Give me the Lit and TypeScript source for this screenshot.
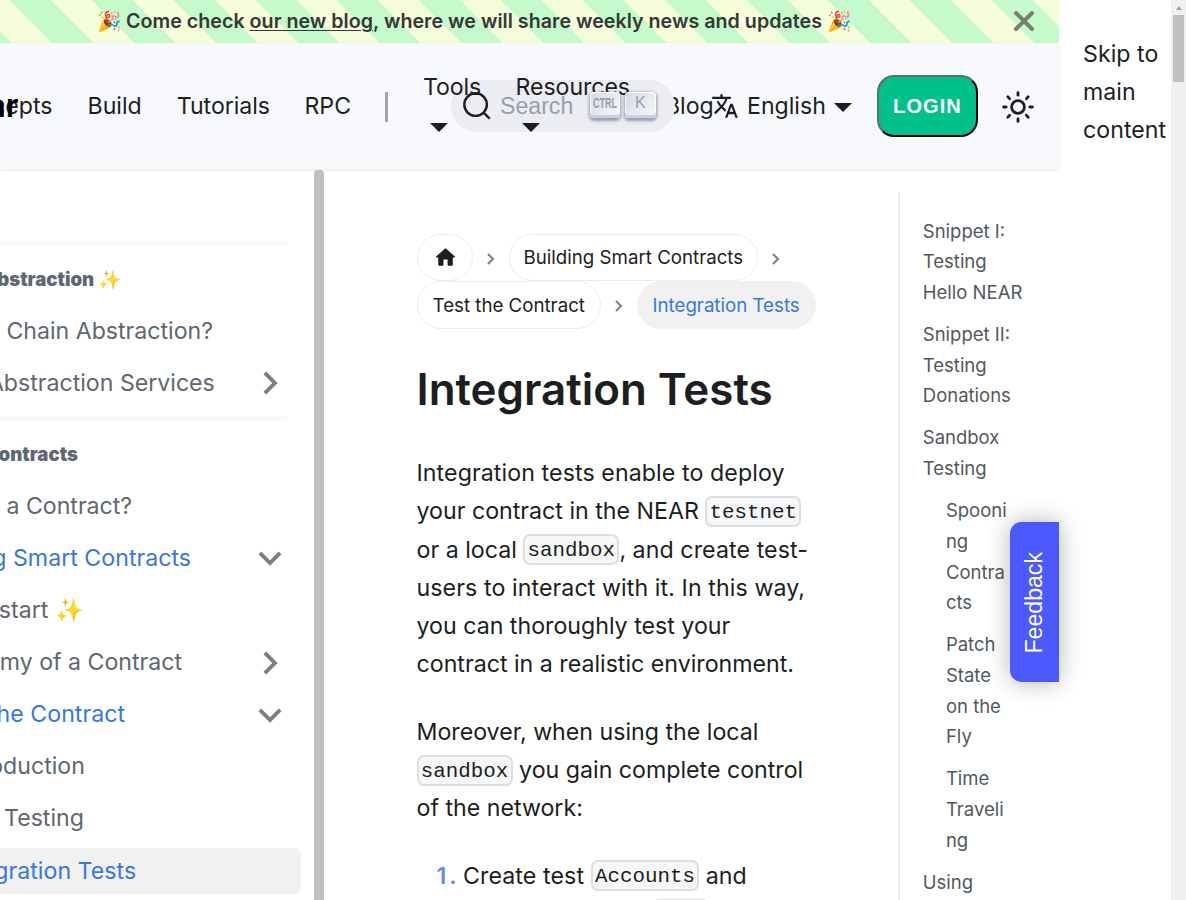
import { LitElement, html, css, svg } from "lit";
import { customElement } from "lit/decorators.js";

const chevron = (open: boolean) => html`
  <svg class="chev" width="46" height="46" viewBox="0 0 24 24">
    <path fill="#7f7f7f" transform=${open ? "rotate(180 12 12)" : "rotate(90 12 12)"}
      d="M7.41 15.41L12 10.83l4.59 4.58L18 14l-6-6-6 6z"></path>
  </svg>`;

const crumbSep = html`
  <svg class="sep" width="12" height="12" viewBox="0 0 12 12">
    <path d="M3 1 L8 6 L3 11" fill="none" stroke="#7f7f7f" stroke-width="2"></path>
  </svg>`;

type Row = { t: string; level: number; on?: boolean; chev?: "open" | "closed"; active?: boolean };

const groupA: Row[] = [
  { t: "What is Chain Abstraction?", level: 1 },
  { t: "Chain Abstraction Services", level: 1, chev: "closed" },
];
const groupB: Row[] = [
  { t: "What is a Contract?", level: 1 },
  { t: "Building Smart Contracts", level: 1, on: true, chev: "open" },
  { t: "Quickstart ✨", level: 2 },
  { t: "Anatomy of a Contract", level: 2, chev: "closed" },
  { t: "Test the Contract", level: 2, on: true, chev: "open" },
  { t: "Introduction", level: 3 },
  { t: "Unit Testing", level: 3 },
  { t: "Integration Tests", level: 3, on: true, active: true },
];
const toc: { lines: string[]; sub?: boolean }[] = [
  { lines: ["Snippet I:", "Testing", "Hello NEAR"] },
  { lines: ["Snippet II:", "Testing", "Donations"] },
  { lines: ["Sandbox", "Testing"] },
  { lines: ["Spooni", "ng", "Contra", "cts"], sub: true },
  { lines: ["Patch", "State", "on the", "Fly"], sub: true },
  { lines: ["Time", "Traveli", "ng"], sub: true },
  { lines: ["Using"] },
];

@customElement("app-root")
export class AppRoot extends LitElement {
  static styles = css`
    :host { display: block; height: 900px; overflow: hidden; background: #fff; color: #1c1e21;
      font: 23.14px/38.2px Inter, sans-serif; }
    * { box-sizing: border-box; }
    svg { display: block; flex: none; }
    .frame { display: grid; grid-template-columns: 1059px 112px 15px; height: 900px; }
    .site { display: flex; flex-direction: column; min-width: 0; height: 900px; }

    .banner { height: 43px; flex: none; display: flex; align-items: center; position: relative;
      background: repeating-linear-gradient(45deg, #c5fbcc 0 8.3px, #f5fddb 8.3px 37.2px, #c5fbcc 37.2px 57.86px);
      color: #373737; font-weight: 600; font-size: 19.67px; line-height: 43px; letter-spacing: .015px; }
    .banner p { margin: 0; width: 948px; text-align: center; white-space: nowrap; }
    .banner u { text-decoration-thickness: 1px; text-underline-offset: 2px; }
    .close { margin-left: 64.5px; margin-top: -1px; }

    .nav { height: 126px; margin-bottom: 1px; padding-top: 1px; flex: none; display: flex; align-items: center; background: #f8f9fc; position: relative;
      z-index: 1; box-shadow: 0 1px 3px rgba(0,0,0,.1); white-space: nowrap; }
    .nav > * { flex: none; }
    .concepts { width: 87.5px; display: flex; justify-content: flex-end; padding-right: 35px; position: relative; }
    .logo { position: absolute; right: 69px; top: 0; font-weight: 600; font-size: 32px; color: #000; }
    .build { width: 89.3px; }
    .tutorials { width: 127.7px; letter-spacing: -.05px; }
    .rpc { width: 80.5px; }
    .bar { width: 3px; height: 30px; background: #a3a4a6; }
    .drop { position: relative; z-index: 2; height: 76px; display: flex; flex-direction: column; margin-top: -1px; }
    .tri { width: 0; height: 0; border: 9px solid transparent; border-top-color: #1c1e21; border-bottom: 0; margin: 16.5px 0 0 7px; }
    .tools { width: 92.5px; margin-left: 35px; letter-spacing: -.1px; }
    .resources { width: 149.5px; letter-spacing: -.05px; }
    .blog { width: 46px; }
    .english { display: flex; align-items: center; width: 166px; }
    .english .tri { margin: 3px 0 0 8px; }
    .english svg { margin-right: 8px; }
    .search { position: absolute; left: 451px; top: 37px; width: 223.5px; height: 52px; border-radius: 26px; background: #ebedf0;
      z-index: 1; }
    .searchtop { position: absolute; z-index: 3; left: 451px; top: 37px; width: 223.5px; height: 52px; display: flex; align-items: center;
      padding-left: 11px; }
    .ph { font: 23.14px "Liberation Sans", sans-serif; color: #969faf; margin-left: 8px; width: 89.5px; }
    .key { width: 30.5px; height: 26px; border-radius: 4px; margin: -2px 5px 0 0; display: flex; justify-content: center;
      background: linear-gradient(-225deg, #d5dbe4, #f8f8f8);
      box-shadow: inset 0 -3px 0 0 #cdcde6, inset 0 0 1px 1px #fff, 0 1.5px 3px 1px rgba(30,35,90,.4);
      color: #969faf; font: 16px/21px "Liberation Sans", sans-serif; }
    .ctrl span { display: block; transform: scaleX(.6); font-weight: 700; font-size: 15px; line-height: 22px; }
    .login { width: 101px; height: 62px; border: 2px outset #1c1e21; border-radius: 17px; background: #00c08b; color: #fff;
      font: bold 20px "Liberation Sans", sans-serif; letter-spacing: 1.1px; padding: 0; margin: -1px 23px 0 0; }

    .body { flex: 1; display: grid; grid-template-columns: 323.5px 574.7px 160.8px; min-height: 0; }
    .side { display: flex; justify-content: space-between; min-height: 0; overflow: hidden; color: #606770; }
    .menu { width: 400px; margin-left: -98.8px; padding-top: 71px; flex: none; }
    .hr { height: 5px; background: #f8f8f9; margin-right: 14px; }
    .head { font-size: 18.6px; font-weight: 900; line-height: 23px; height: 23px; margin: 22px 0 17px 22.9px; white-space: nowrap; }
    .row { height: 46.3px; margin-top: 5.83px; display: flex; align-items: center; justify-content: space-between; border-radius: 5.8px;
      padding: 0 8.7px 0 17.4px; line-height: 28.9px; white-space: nowrap; }
    .row.l2 { margin-left: 17.36px; }
    .row.l3 { margin-left: 34.9px; }
    .row.on { color: #3578e5; letter-spacing: .03px; }
    .row.active { background: #f1f1f1; }
    .gap { height: 9.6px; }
    .track { width: 10px; border-radius: 5px 5px 0 0; background: #c0c0c0; flex: none; margin-top: -1px; position: relative; z-index: 2; }

    .main { padding: 64px 0 0 93px; min-height: 0; overflow: hidden; font-size: 23.18px; }
    .crumbs { display: flex; flex-direction: column; font-size: 18.7px; line-height: 30px; }
    .cr { display: flex; align-items: center; height: 47.4px; white-space: nowrap; }
    .pill { height: 47.4px; border: 1px solid #ebecee; border-radius: 24px; display: flex; align-items: center; justify-content: center; flex: none;
      padding-top: 1px; }
    .pill.cur { background: #f1f1f1; color: #3578e5; border-color: #f1f1f1; }
    .home { width: 56.5px; padding: 0; }
    .home svg { margin: -1px 0 0 1px; }
    .p2 { width: 249.5px; } .p3 { width: 184.5px; } .p4 { width: 179px; }
    .sep { margin: 2px 11.8px 0; }
    h1 { font-size: 43.9px; line-height: 57px; font-weight: 600; margin: 32px 0 36.5px; }
    .para { margin: 0 0 29.3px; white-space: nowrap; }
    .wide { letter-spacing: .09px; }
    code { font: 20.83px/28px "Liberation Mono", monospace; background: #f6f7f8; border: 2px solid #dcdee0;
      border-radius: 7px; padding: 1px 2.3px 1px; vertical-align: middle; display: inline-block; height: 31px; margin: -3px 0 0; }
    .li { display: flex; padding-left: 20px; white-space: nowrap; }
    .num { color: #6488ff; font-weight: 600; width: 26.5px; letter-spacing: 3px; }
    .li2 { padding-left: 235px; }

    .toc { margin-top: 22px; border-left: 2px solid #eeeeef; padding: 23.6px 0 0 22.6px; font-size: 18.51px; line-height: 30.63px;
      color: #525860; min-height: 0; overflow: hidden; }
    .ti { margin-bottom: 11.57px; white-space: nowrap; }
    .ti.sub { margin-left: 23.14px; }
    .feedback { position: absolute; left: 1010px; top: 522.3px; width: 49px; height: 160px; background: #4a5aff; color: #fff; z-index: 3;
      border-radius: 11.6px 0 0 11.6px; box-shadow: 0 0 23px rgba(0,0,0,.3); font: 23.14px "Liberation Sans", sans-serif;
      display: flex; align-items: center; justify-content: center; }
    .feedback span { writing-mode: vertical-rl; transform: rotate(180deg); }
    .skip { padding: 34.5px 0 0 24px; letter-spacing: .05px; }
    .scroll { background: #f0f0f0; display: flex; flex-direction: column; align-items: center; padding-top: 6px; }
    .up { width: 0; height: 0; border: 3.5px solid transparent; border-top: 0; border-bottom: 4px solid #a3a3a3; }
    .thumb { width: 11px; height: 67px; background: #c1c1c1; margin-top: 5px; }
  `;

  row(r: Row) {
    return html`<div class="row l${r.level} ${r.on ? "on" : ""} ${r.active ? "active" : ""}">
      <span>${r.t}</span>${r.chev ? chevron(r.chev === "open") : ""}</div>`;
  }

  render() {
    const rays = [0, 45, 90, 135, 180, 225, 270, 315];
    return html`
      <div class="frame">
        <div class="site">
          <div class="banner">
            <p>🎉 Come check <u>our new blog</u>, where we will share weekly news and updates 🎉</p>
            <svg class="close" width="22" height="22" viewBox="0 0 22 22">
              <path d="M3 3L19 19M19 3L3 19" stroke="#7b806e" stroke-width="4" stroke-linecap="round"></path>
            </svg>
          </div>
          <div class="nav">
            <div class="concepts">Concepts<span class="logo">Near</span></div>
            <div class="build">Build</div>
            <div class="tutorials">Tutorials</div>
            <div class="rpc">RPC</div>
            <div class="bar"></div>
            <div class="drop tools">Tools<i class="tri"></i></div>
            <div class="drop resources">Resources<i class="tri"></i></div>
            <div class="blog">Blog</div>
            <div class="english">
              <svg width="28" height="28" viewBox="0 0 24 24"><path fill="#1c1e21" d="M12.87 15.07l-2.54-2.51.03-.03c1.74-1.94 2.98-4.17 3.71-6.53H17V4h-7V2H8v2H1v1.99h11.17C11.5 7.92 10.44 9.75 9 11.35 8.07 10.32 7.3 9.19 6.69 8h-2c.73 1.63 1.73 3.17 2.98 4.56l-5.09 5.02L4 19l5-5 3.11 3.11.76-2.04zM18.5 10h-2L12 22h2l1.12-3h4.75L21 22h2l-4.500-12zm-2.620 7l1.620-4.330L19.120 17h-3.240z"></path></svg>
              English<i class="tri"></i>
            </div>
            <button class="login">LOGIN</button>
            <svg width="34" height="34" viewBox="-17 -17 34 34">
              <circle r="6.4" fill="none" stroke="#1c1e21" stroke-width="2.8"></circle>
              ${rays.map((a) => svg`<path transform="rotate(${a})" d="M0 -14.400V-11.800" stroke="#1c1e21" stroke-width="2.8" stroke-linecap="round"></path>`)}
            </svg>
            <div class="search"></div>
            <div class="searchtop">
              <svg width="30" height="30" viewBox="0 0 20 20"><path d="M14.386 14.386l4.0877 4.0877-4.0877-4.0877c-2.9418 2.9419-7.7115 2.9419-10.6533 0-2.9419-2.9418-2.9419-7.7115 0-10.6533 2.9418-2.9419 7.7115-2.9419 10.6533 0 2.9419 2.9418 2.9419 7.7115 0 10.6533z" stroke="#1c1e21" stroke-width="1.6" fill="none" stroke-linecap="round"></path></svg>
              <span class="ph">Search</span>
              <span class="key ctrl"><span>CTRL</span></span>
              <span class="key">K</span>
            </div>
          </div>
          <div class="body">
            <div class="side">
              <div class="menu">
                <div class="hr"></div>
                <div class="head">Chain Abstraction ✨</div>
                ${groupA.map((r) => this.row(r))}
                <div class="gap"></div>
                <div class="hr"></div>
                <div class="head">Smart Contracts</div>
                ${groupB.map((r) => this.row(r))}
              </div>
              <div class="track"></div>
            </div>
            <div class="main">
              <div class="crumbs">
                <div class="cr">
                  <span class="pill home"><svg width="25" height="25" viewBox="0 0 24 24"><path fill="#1c1e21" d="M10 19v-5h4v5c0 .55.45 1 1 1h3c.55 0 1-.45 1-1v-7h1.700c.46 0 .68-.57.33-.87L12.670 3.600c-.38-.34-.96-.34-1.340 0l-8.360 7.530c-.34.3-.13.87.33.87H5v7c0 .55.45 1 1 1h3c.55 0 1-.45 1-1z"></path></svg></span>
                  ${crumbSep}<span class="pill p2">Building Smart Contracts</span>${crumbSep}
                </div>
                <div class="cr"><span class="pill p3">Test the Contract</span>${crumbSep}<span class="pill cur p4">Integration Tests</span></div>
              </div>
              <h1>Integration Tests</h1>
              <p class="para"><span class="wide">Integration tests enable to deploy</span><br>your contract in the NEAR <code>testnet</code><br>or a local <code>sandbox</code>, <span class="wide">and create test-</span><br><span class="wide">users to interact with it. In this way,</span><br>you can thoroughly test your<br>contract in a realistic environment.</p>
              <p class="para">Moreover, when using the local<br><code>sandbox</code> you gain complete control<br>of the network:</p>
              <div class="li"><span class="num">1.</span><span><span class="wide">Create test </span><code>Accounts</code> and</span></div>
              <div class="li2"><code>test</code></div>
            </div>
            <div class="toc">
              ${toc.map((i) => html`<div class="ti ${i.sub ? "sub" : ""}">${i.lines.map((l) => html`<div>${l}</div>`)}</div>`)}
            </div>
          </div>
        </div>
        <div class="skip">Skip to<br>main<br>content</div>
        <div class="scroll"><i class="up"></i><i class="thumb"></i></div>
      </div>
      <div class="feedback"><span>Feedback</span></div>
    `;
  }
}
